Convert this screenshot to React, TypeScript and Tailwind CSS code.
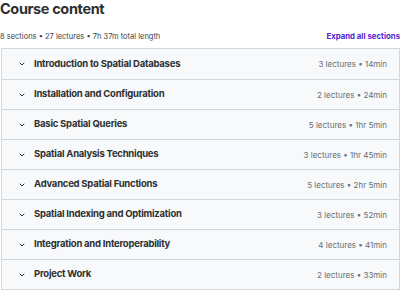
import React from 'react'

const sections = [
  { title: 'Introduction to Spatial Databases', info: '3 lectures • 14min' },
  { title: 'Installation and Configuration', info: '2 lectures • 24min' },
  { title: 'Basic Spatial Queries', info: '5 lectures • 1hr 5min' },
  { title: 'Spatial Analysis Techniques', info: '3 lectures • 1hr 45min' },
  { title: 'Advanced Spatial Functions', info: '5 lectures • 2hr 5min' },
  { title: 'Spatial Indexing and Optimization', info: '3 lectures • 52min' },
  { title: 'Integration and Interoperability', info: '4 lectures • 41min' },
  { title: 'Project Work', info: '2 lectures • 33min' },
]

const Chevron = () => (
  <svg width="8" height="8" viewBox="0 0 24 24" fill="none" stroke="#2d2f31" strokeWidth="3" strokeLinecap="round" strokeLinejoin="round">
    <path d="M6 9l6 6 6-6" />
  </svg>
)

const App: React.FC = () => {
  return (
    <div className='w-[400px] h-[291px] bg-white overflow-hidden text-[#2d2f31]' style={{ fontFamily: 'Inter, "Noto Sans", sans-serif' }}>
      <h2 className='text-[14.5px] leading-[17px] font-bold tracking-tight'>Course content</h2>
      <div className='flex items-center justify-between mt-[14px] h-[12px]'>
        <p className='text-[7.5px] text-[#3e4143]'>8 sections • 27 lectures • 7h 37m total length</p>
        <button className='text-[7.8px] font-bold text-[#5624d0]'>Expand all sections</button>
      </div>
      <div className='mt-[5px] ml-[1px] border border-[#d1d7dc]'>
        {sections.map((s, i) => (
          <div
            key={i}
            className={'flex items-center justify-between h-[30px] bg-[#f7f9fa] pl-[16px] pr-[12px] ' + (i > 0 ? 'border-t border-[#d1d7dc]' : '')}
          >
            <div className='flex items-center gap-[8px]'>
              <Chevron />
              <span className='text-[9.5px] font-bold tracking-tight'>{s.title}</span>
            </div>
            <span className='text-[8px] text-[#6a6f73]'>{s.info}</span>
          </div>
        ))}
      </div>
    </div>
  )
}

export default App
